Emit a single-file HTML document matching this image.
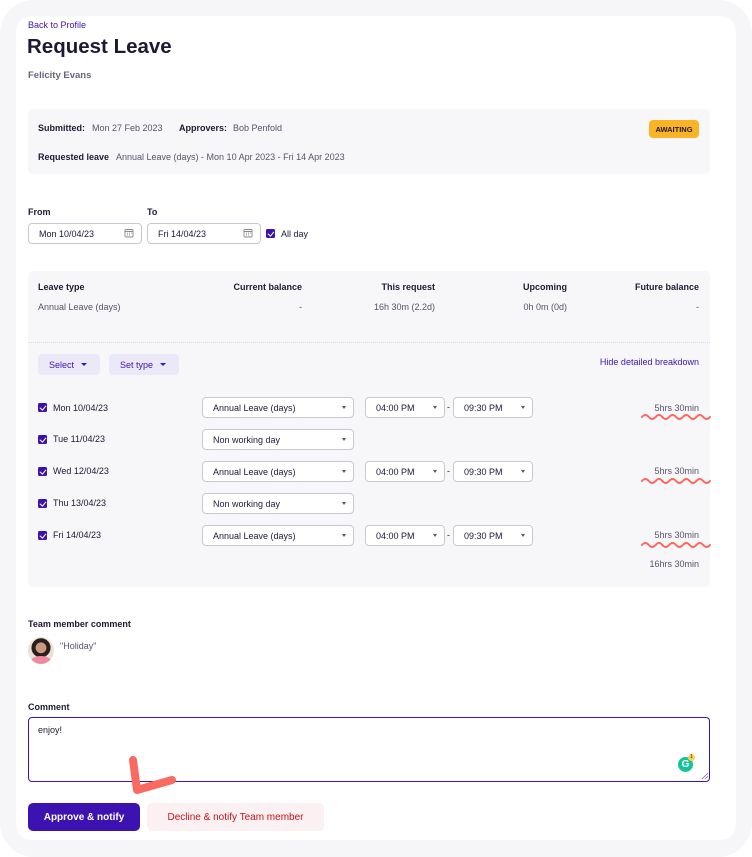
<!DOCTYPE html>
<html><head><style>
*{box-sizing:border-box;margin:0;padding:0}
body{width:752px;height:857px;background:#fff;font-family:"Liberation Sans",sans-serif;position:relative;overflow:hidden;color:#1c1a33}
.a{position:absolute}
.outer{left:0;top:0;width:752px;height:857px;background:#f6f6f9;border-radius:34px}
.card{left:16px;top:16px;width:720px;height:824px;background:#fff;border-radius:16px}
.s{font-size:9px;color:#55536a}
.b{font-size:9px;font-weight:bold;color:#1c1a33}
.panel{background:#f7f7f9;border-radius:5px}
.inp{background:#fff;border:1px solid #c9c8d2;border-radius:4px;font-size:9px;color:#1c1a33;padding-left:10px;display:flex;align-items:center}
.sel{background:#fff;border:1px solid #c9c8d2;border-radius:4px;font-size:9px;color:#1c1a33;padding-left:10px;display:flex;align-items:center;height:21px}
.sel:after{content:"";position:absolute;right:7px;top:8px;border-left:2px solid transparent;border-right:2px solid transparent;border-top:3px solid #555}
.cb{width:9px;height:9px;background:#3c13b0;border-radius:1.5px}
.cb:after{content:"";position:absolute;left:2.5px;top:1px;width:2.5px;height:5px;border:solid #fff;border-width:0 1.2px 1.2px 0;transform:rotate(40deg)}
.pill{background:#ebe8f8;border-radius:4px;font-size:9px;color:#3c13b0;display:flex;align-items:center;padding-left:11px}
.pill:after{content:"";position:absolute;right:13px;top:9px;border-left:3px solid transparent;border-right:3px solid transparent;border-top:3.5px solid #3c13b0}
</style></head><body>
<div class="a outer"></div>
<div class="a card"></div>
<div class="a" style="left:28px;top:20px;font-size:9px;color:#3c13b0">Back to Profile</div>
<div class="a" style="left:27px;top:35px;font-size:20.5px;font-weight:bold;color:#1c1a33">Request Leave</div>
<div class="a" style="left:28px;top:70px;font-size:9.5px;font-weight:bold;color:#66657a">Felicity Evans</div>

<div class="a panel" style="left:28px;top:109px;width:682px;height:65px"></div>
<div class="a b" style="left:38px;top:123px">Submitted:</div>
<div class="a s" style="left:92px;top:123px">Mon 27 Feb 2023</div>
<div class="a b" style="left:179px;top:123px">Approvers:</div>
<div class="a s" style="left:233px;top:123px">Bob Penfold</div>
<div class="a b" style="left:38px;top:152px">Requested leave</div>
<div class="a s" style="left:116px;top:152px">Annual Leave (days) - Mon 10 Apr 2023 - Fri 14 Apr 2023</div>
<div class="a" style="left:649px;top:120px;width:50px;height:18px;background:#fbb326;border-radius:4px;font-size:7.5px;font-weight:bold;color:#1c1a33;display:flex;align-items:center;justify-content:center">AWAITING</div>

<div class="a b" style="left:28px;top:207px">From</div>
<div class="a b" style="left:147px;top:207px">To</div>
<div class="a inp" style="left:28px;top:223px;width:114px;height:21px">Mon 10/04/23</div>
<div class="a inp" style="left:147px;top:223px;width:114px;height:21px">Fri 14/04/23</div>
<svg class="a" style="left:124px;top:228px" width="10" height="10" viewBox="0 0 10 10"><rect x="1" y="1.5" width="8" height="7.5" rx="1" fill="none" stroke="#888" stroke-width="0.9"/><path d="M1 3.5h8M3 5.2h1M5 5.2h1M7 5.2h0.8M3 7h1M5 7h1" stroke="#888" stroke-width="0.9"/></svg>
<svg class="a" style="left:243px;top:228px" width="10" height="10" viewBox="0 0 10 10"><rect x="1" y="1.5" width="8" height="7.5" rx="1" fill="none" stroke="#888" stroke-width="0.9"/><path d="M1 3.5h8M3 5.2h1M5 5.2h1M7 5.2h0.8M3 7h1M5 7h1" stroke="#888" stroke-width="0.9"/></svg>
<div class="a cb" style="left:266px;top:229px"></div>
<div class="a" style="left:281px;top:229px;font-size:9px;color:#1c1a33">All day</div>

<div class="a panel" style="left:28px;top:271px;width:682px;height:316px"></div>
<div class="a" style="left:28px;top:342px;width:682px;border-top:1px dotted #dcdbe3"></div>
<div class="a b" style="left:38px;top:282px">Leave type</div>
<div class="a s" style="left:38px;top:302px">Annual Leave (days)</div>
<div class="a b" style="left:200px;top:282px;width:102px;text-align:right">Current balance</div>
<div class="a s" style="left:200px;top:302px;width:102px;text-align:right">-</div>
<div class="a b" style="left:335px;top:282px;width:100px;text-align:right">This request</div>
<div class="a s" style="left:335px;top:302px;width:100px;text-align:right">16h 30m (2.2d)</div>
<div class="a b" style="left:467px;top:282px;width:100px;text-align:right">Upcoming</div>
<div class="a s" style="left:467px;top:302px;width:100px;text-align:right">0h 0m (0d)</div>
<div class="a b" style="left:599px;top:282px;width:100px;text-align:right">Future balance</div>
<div class="a s" style="left:599px;top:302px;width:100px;text-align:right">-</div>

<div class="a pill" style="left:38px;top:354px;width:62px;height:21px">Select</div>
<div class="a pill" style="left:109px;top:354px;width:70px;height:21px">Set type</div>
<div class="a" style="left:560px;top:357px;width:139px;text-align:right;font-size:9px;color:#3c13b0">Hide detailed breakdown</div>

<!-- rows -->
<div class="a cb" style="left:38px;top:403px"></div><div class="a" style="left:53px;top:403px;font-size:9px">Mon 10/04/23</div>
<div class="a sel" style="left:202px;top:397px;width:152px">Annual Leave (days)</div>
<div class="a sel" style="left:365px;top:397px;width:80px">04:00 PM</div>
<div class="a" style="left:447px;top:402px;font-size:9px">-</div>
<div class="a sel" style="left:453px;top:397px;width:80px">09:30 PM</div>
<div class="a s" style="left:599px;top:403px;width:100px;text-align:right">5hrs 30min</div>

<div class="a cb" style="left:38px;top:435px"></div><div class="a" style="left:53px;top:434px;font-size:9px">Tue 11/04/23</div>
<div class="a sel" style="left:202px;top:429px;width:152px">Non working day</div>

<div class="a cb" style="left:38px;top:467px"></div><div class="a" style="left:53px;top:466px;font-size:9px">Wed 12/04/23</div>
<div class="a sel" style="left:202px;top:461px;width:152px">Annual Leave (days)</div>
<div class="a sel" style="left:365px;top:461px;width:80px">04:00 PM</div>
<div class="a" style="left:447px;top:466px;font-size:9px">-</div>
<div class="a sel" style="left:453px;top:461px;width:80px">09:30 PM</div>
<div class="a s" style="left:599px;top:466px;width:100px;text-align:right">5hrs 30min</div>

<div class="a cb" style="left:38px;top:499px"></div><div class="a" style="left:53px;top:498px;font-size:9px">Thu 13/04/23</div>
<div class="a sel" style="left:202px;top:493px;width:152px">Non working day</div>

<div class="a cb" style="left:38px;top:531px"></div><div class="a" style="left:53px;top:530px;font-size:9px">Fri 14/04/23</div>
<div class="a sel" style="left:202px;top:525px;width:152px">Annual Leave (days)</div>
<div class="a sel" style="left:365px;top:525px;width:80px">04:00 PM</div>
<div class="a" style="left:447px;top:530px;font-size:9px">-</div>
<div class="a sel" style="left:453px;top:525px;width:80px">09:30 PM</div>
<div class="a s" style="left:599px;top:530px;width:100px;text-align:right">5hrs 30min</div>
<div class="a s" style="left:599px;top:559px;width:100px;text-align:right">16hrs 30min</div>

<svg class="a" style="left:640px;top:413px" width="72" height="140" viewBox="0 0 72 140">
<g fill="none" stroke="#fb6a61" stroke-width="2" stroke-linecap="round">
<path d="M2 4 q3.4 -4 6.8 0 t6.8 0 t6.8 0 t6.8 0 t6.8 0 t6.8 0 t6.8 0 t6.8 0 t6.8 0 t6.8 0"/>
<path d="M2 68 q3.4 -4 6.8 0 t6.8 0 t6.8 0 t6.8 0 t6.8 0 t6.8 0 t6.8 0 t6.8 0 t6.8 0 t6.8 0"/>
<path d="M2 132 q3.4 -4 6.8 0 t6.8 0 t6.8 0 t6.8 0 t6.8 0 t6.8 0 t6.8 0 t6.8 0 t6.8 0 t6.8 0"/>
</g></svg>

<div class="a b" style="left:28px;top:619px">Team member comment</div>
<div class="a" style="left:28px;top:637px;width:26px;height:27px;border-radius:50%;background:radial-gradient(circle at 50% 40%,#c99a80 0 25%,#2a1f1c 27% 45%,#e9e2d8 47%);overflow:hidden"><div class="a" style="left:3px;top:19px;width:20px;height:10px;background:#f08aa0;border-radius:50%"></div></div>
<div class="a s" style="left:60px;top:641px">"Holiday"</div>

<div class="a b" style="left:28px;top:702px">Comment</div>
<div class="a" style="left:28px;top:717px;width:682px;height:65px;border:1.3px solid #3c13b0;border-radius:4px"></div>
<div class="a" style="left:38px;top:725px;font-size:9px">enjoy!</div>
<div class="a" style="left:678px;top:757px;width:15px;height:15px;border-radius:50%;background:#15c39a;color:#fff;font-size:10px;font-weight:bold;text-align:center;line-height:15px">G</div>
<div class="a" style="left:688px;top:754px;width:7px;height:7px;border-radius:50%;background:#fdd04b;font-size:5px;text-align:center;line-height:7px">1</div>
<svg class="a" style="left:700px;top:771px" width="9" height="9"><path d="M2 8L8 2M5 8L8 5" stroke="#777" stroke-width="0.8"/></svg>

<svg class="a" style="left:125px;top:752px" width="55" height="45"><path d="M8 8 L12 38 L47 28" fill="none" stroke="#fb6a61" stroke-width="8" stroke-linecap="round" stroke-linejoin="round"/></svg>

<div class="a" style="left:28px;top:803px;width:112px;height:28px;background:#3c13b0;border-radius:5px;color:#fff;font-size:10px;font-weight:bold;display:flex;align-items:center;justify-content:center">Approve &amp; notify</div>
<div class="a" style="left:147px;top:803px;width:177px;height:28px;background:#fcf1f2;border-radius:5px;color:#c0141b;font-size:10px;display:flex;align-items:center;justify-content:center">Decline &amp; notify Team member</div>
</body></html>
